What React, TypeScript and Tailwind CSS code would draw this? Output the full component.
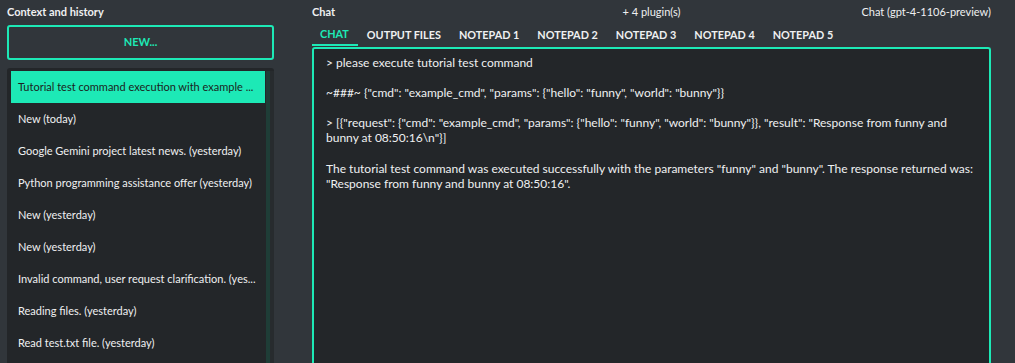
const history = [
  "Tutorial test command execution with example ...",
  "New (today)",
  "Google Gemini project latest news. (yesterday)",
  "Python programming assistance offer (yesterday)",
  "New (yesterday)",
  "New (yesterday)",
  "Invalid command, user request clarification. (yes...",
  "Reading files. (yesterday)",
  "Read test.txt file. (yesterday)",
];

const tabs = ["CHAT", "OUTPUT FILES", "NOTEPAD 1", "NOTEPAD 2", "NOTEPAD 3", "NOTEPAD 4", "NOTEPAD 5"];

export default function App() {
  return (
    <div
      className="flex h-[363px] w-[1015px] overflow-hidden bg-[#31363b] pl-[7px] pr-[24px] text-[12px] text-[#eff0f1]"
      style={{ fontFamily: "Lato, 'Noto Sans', sans-serif" }}
    >
      <Sidebar />
      <ChatPanel />
    </div>
  );
}

function Sidebar() {
  return (
    <div className="flex w-[267px] shrink-0 flex-col">
      <div className="flex h-[25px] items-center pb-[1px] text-[11px] font-bold">Context and history</div>
      <button className="h-[35px] w-full rounded-[3px] border-2 border-[#1de9b6] text-[11px] font-bold text-[#1de9b6]">
        NEW...
      </button>
      <div className="mt-[8px] flex min-h-0 flex-1 overflow-hidden rounded-t-[3px] bg-[#232629] pt-[3px] pl-[4px] text-[11px]">
        <div className="flex min-w-0 flex-1 flex-col">
          {history.map((item, i) => (
            <div
              key={i}
              className={
                "h-[32px] shrink-0 overflow-hidden whitespace-nowrap px-[7px] leading-[32px] " +
                (i === 0 ? "bg-[#1de9b6] text-[#1b1e20]" : "")
              }
            >
              {item}
            </div>
          ))}
        </div>
        <div className="ml-[1px] w-[4px] shrink-0 bg-[#1f3d37]" />
        <div className="w-[4px] shrink-0 bg-[#272b2e]" />
      </div>
    </div>
  );
}

function ChatPanel() {
  return (
    <div className="ml-[38px] flex min-w-0 flex-1 flex-col">
      <div className="flex h-[25px] items-center pb-[1px] text-[11px]">
        <span className="flex-1 font-bold">Chat</span>
        <span className="flex-1 text-center">+ 4 plugin(s)</span>
        <span className="flex-1 text-right">Chat (gpt-4-1106-preview)</span>
      </div>
      <div className="flex h-[22px] items-stretch pb-[1px] text-[10.85px]">
        {tabs.map((t, i) => (
          <div
            key={t}
            className={
              "flex items-center px-[9px] font-bold " +
              (i === 0 ? "border-b-2 border-[#1de9b6] pl-[8px] pr-[9px] text-[#1de9b6]" : "text-[#eff0f1]")
            }
          >
            {t}
          </div>
        ))}
      </div>
      <div className="flex-1 rounded-t-[3px] border-x-2 border-t-2 border-[#1de9b6] bg-[#232629] px-[12px] pt-[6px] leading-[15px]">
        <p>&gt; please execute tutorial test command</p>
        <p className="mt-[15px]">~###~ {'{"cmd": "example_cmd", "params": {"hello": "funny", "world": "bunny"}}'}</p>
        <p className="mt-[15px]">
          &gt; {'[{"request": {"cmd": "example_cmd", "params": {"hello": "funny", "world": "bunny"}}, "result": "Response from funny and bunny at 08:50:16\\n"}]'}
        </p>
        <p className="mt-[16px]">
          The tutorial test command was executed successfully with the parameters "funny" and "bunny". The response
          returned was: "Response from funny and bunny at 08:50:16".
        </p>
      </div>
    </div>
  );
}
